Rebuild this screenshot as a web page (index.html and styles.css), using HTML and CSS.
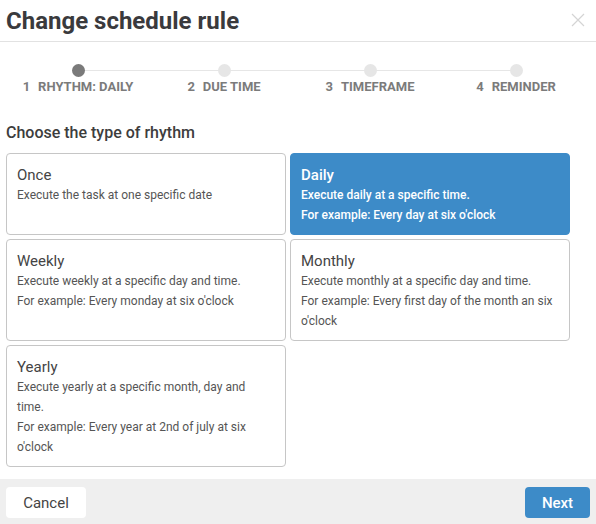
FILE: index.html
```html
<!DOCTYPE html>
<html>
<head>
<meta charset="utf-8">
<link rel="stylesheet" href="styles.css">
</head>
<body>
<div class="dialog">
  <div class="header">
    <h1 class="title">Change schedule rule</h1>
    <svg class="close" width="14" height="14" viewBox="0 0 14 14"><path d="M1 1L13 13M13 1L1 13" stroke="#d4d4d4" stroke-width="1.2" fill="none"/></svg>
  </div>
  <div class="main">
    <div class="stepper">
      <div class="step active"><span class="dot"></span><span class="label"><span class="num">1</span>RHYTHM: DAILY</span></div>
      <div class="step"><span class="dot"></span><span class="label"><span class="num">2</span>DUE TIME</span></div>
      <div class="step"><span class="dot"></span><span class="label"><span class="num">3</span>TIMEFRAME</span></div>
      <div class="step"><span class="dot"></span><span class="label"><span class="num">4</span>REMINDER</span></div>
    </div>
    <h2 class="section">Choose the type of rhythm</h2>
    <div class="cards">
      <div class="card">
        <div class="card-title">Once</div>
        <div class="card-text">Execute the task at one specific date</div>
      </div>
      <div class="card selected">
        <div class="card-title">Daily</div>
        <div class="card-text">Execute daily at a specific time.<br>For example: Every day at six o'clock</div>
      </div>
      <div class="card">
        <div class="card-title">Weekly</div>
        <div class="card-text">Execute weekly at a specific day and time.<br>For example: Every monday at six o'clock</div>
      </div>
      <div class="card">
        <div class="card-title">Monthly</div>
        <div class="card-text">Execute monthly at a specific day and time.<br>For example: Every first day of the month an six o'clock</div>
      </div>
      <div class="card">
        <div class="card-title">Yearly</div>
        <div class="card-text">Execute yearly at a specific month, day and time.<br>For example: Every year at 2nd of july at six o'clock</div>
      </div>
    </div>
  </div>
  <div class="footer">
    <button class="btn cancel">Cancel</button>
    <button class="btn next">Next</button>
  </div>
</div>
</body>
</html>
```
FILE: styles.css
```css
html, body {
  margin: 0;
  padding: 0;
  background: #fff;
}
body {
  font-family: Roboto, "Liberation Sans", sans-serif;
  color: #444;
}
.dialog {
  width: 596px;
  height: 524px;
  display: flex;
  flex-direction: column;
  overflow: hidden;
}
.header {
  height: 41px;
  border-bottom: 1px solid #e2e2e2;
  display: flex;
  align-items: center;
  justify-content: space-between;
  padding: 0 11px 0 6px;
  flex-shrink: 0;
}
.title {
  margin: 0;
  font-size: 24px;
  font-weight: 700;
  color: #3a3a3d;
  line-height: 38px;
}
.close {
  margin-top: -2px;
}
.main {
  flex: 1;
  padding: 0 26px 0 6px;
}
.stepper {
  position: relative;
  display: grid;
  grid-template-columns: repeat(4, 146px);
  margin-left: -1px;
  padding-top: 22px;
}
.stepper::before {
  content: "";
  position: absolute;
  left: 72px;
  width: 439px;
  top: 28px;
  height: 1px;
  background: #e6e6e6;
}
.step {
  display: flex;
  flex-direction: column;
  align-items: center;
  position: relative;
}
.dot {
  width: 13px;
  height: 13px;
  border-radius: 50%;
  background: #e6e6e6;
}
.step.active .dot {
  background: #7a7a7a;
}
.label {
  margin-top: 2px;
  font-size: 13px;
  font-weight: 700;
  line-height: 16px;
  color: #7b7b7b;
  white-space: nowrap;
}
.num {
  margin-right: 8px;
}
.section {
  margin: 28px 0 10px 0;
  font-size: 16px;
  font-weight: 500;
  line-height: 20px;
  color: #3d3d3d;
}
.cards {
  display: grid;
  grid-template-columns: 1fr 1fr;
  gap: 4px;
}
.card {
  border: 1px solid #c6c6c6;
  border-radius: 4px;
  padding: 11px 10px 9px 10px;
  background: #fff;
}
.card-title {
  font-size: 15px;
  line-height: 20px;
  color: #444;
}
.card-text {
  font-size: 12px;
  line-height: 20px;
  color: #555;
}
.card.selected {
  background: #3d8bc8;
  border-color: #3d8bc8;
}
.card.selected .card-title {
  color: #fff;
  font-weight: 500;
}
.card.selected .card-text {
  color: #fff;
  font-weight: 500;
}
.footer {
  height: 45px;
  background: #efefef;
  display: flex;
  justify-content: space-between;
  align-items: flex-start;
  padding: 8px 6px 0 6px;
  box-sizing: border-box;
  flex-shrink: 0;
}
.btn {
  height: 31px;
  border: none;
  border-radius: 4px;
  font-family: Roboto, "Liberation Sans", sans-serif;
  font-size: 15px;
  padding: 1px 0 0 0;
}
.cancel {
  width: 80px;
  background: #fff;
  color: #444;
}
.next {
  width: 65px;
  background: #3d8bc8;
  color: #fff;
  font-weight: 500;
}
```
